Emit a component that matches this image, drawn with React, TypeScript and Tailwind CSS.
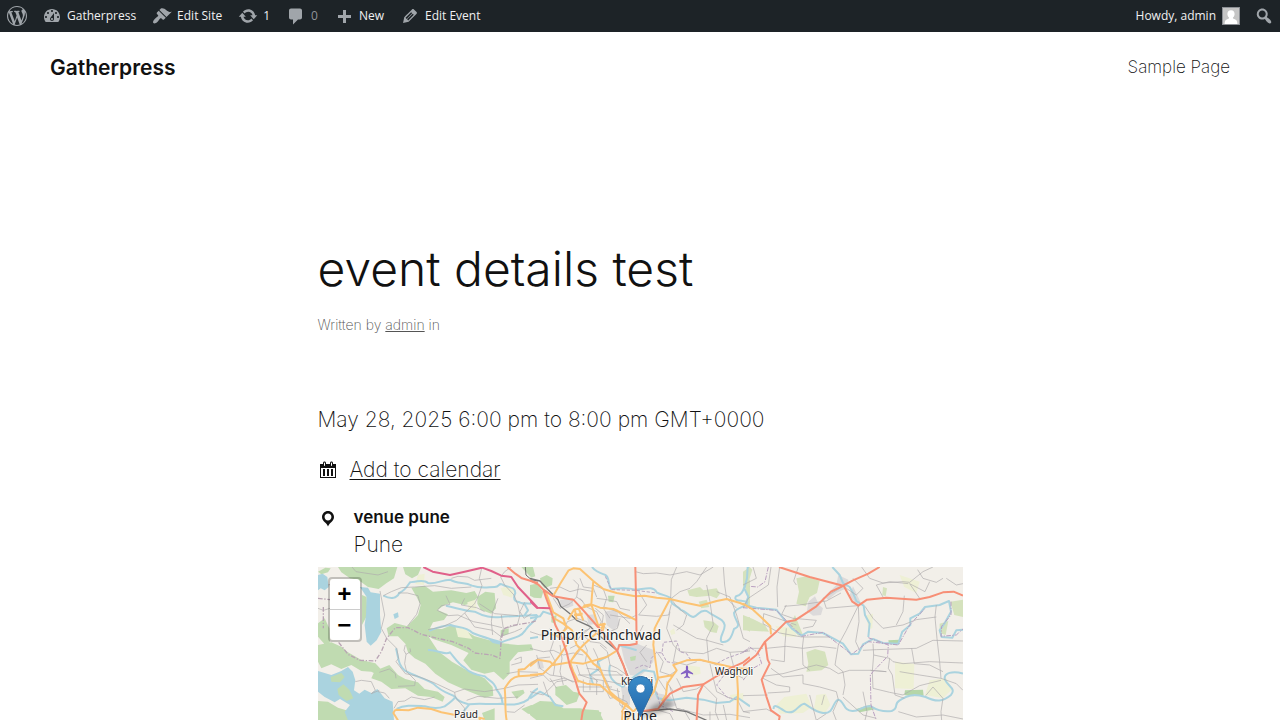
import type { ReactNode } from "react";

const ICONS = {
  wordpress:
    "M20 10c0-5.51-4.49-10-10-10C4.48 0 0 4.49 0 10c0 5.52 4.48 10 10 10 5.51 0 10-4.48 10-10zM7.78 15.37L4.37 6.22c.55-.02 1.17-.08 1.17-.08.5-.06.44-1.13-.06-1.11 0 0-1.45.11-2.37.11-.18 0-.37 0-.58-.01C4.12 2.69 6.87 1.11 10 1.11c2.33 0 4.45.87 6.05 2.34-.68-.11-1.65.39-1.65 1.58 0 .74.45 1.36.9 2.1.35.61.55 1.36.55 2.46 0 1.49-1.4 5-1.4 5l-3.03-8.37c.54-.02.82-.17.82-.17.5-.05.44-1.25-.06-1.22 0 0-1.44.12-2.38.12-.87 0-2.33-.12-2.33-.12-.5-.03-.56 1.2-.06 1.22l.92.08 1.26 3.41zM17.41 10c.24-.64.74-1.87.43-4.25.7 1.29 1.05 2.71 1.05 4.25 0 3.29-1.73 6.24-4.4 7.78.97-2.59 1.94-5.2 2.92-7.78zM6.1 18.09C3.12 16.65 1.11 13.53 1.11 10c0-1.3.23-2.48.72-3.59C3.25 10.3 4.67 14.2 6.1 18.09zm4.03-6.63l2.58 6.98c-.86.29-1.76.45-2.71.45-.79 0-1.57-.11-2.29-.33.81-2.38 1.62-4.74 2.42-7.1z",
  dashboard:
    "M3.76 16h12.48c1.1-1.37 1.76-3.11 1.76-5 0-4.42-3.58-8-8-8s-8 3.58-8 8c0 1.89.66 3.63 1.76 5zM10 4c.55 0 1 .45 1 1s-.45 1-1 1-1-.45-1-1 .45-1 1-1zM6 6c.55 0 1 .45 1 1s-.45 1-1 1-1-.45-1-1 .45-1 1-1zm8 0c.55 0 1 .45 1 1s-.45 1-1 1-1-.45-1-1 .45-1 1-1zm-5.37 5.55L12 7v6c0 1.1-.9 2-2 2s-2-.9-2-2c0-.57.24-1.08.63-1.45zM4 10c.55 0 1 .45 1 1s-.45 1-1 1-1-.45-1-1 .45-1 1-1zm12 0c.55 0 1 .45 1 1s-.45 1-1 1-1-.45-1-1 .45-1 1-1zm-5 3c0-.55-.45-1-1-1s-1 .45-1 1 .45 1 1 1 1-.45 1-1z",
  brush:
    "M14.48 11.06L7.41 3.99l1.5-1.5c.5-.56 2.3-.47 3.51.32 1.21.8 1.43 1.28 2.91 2.1 1.18.64 2.45 1.26 4.45.85zm-.71.71L6.7 4.7 4.93 6.47c-.39.39-.39 1.02 0 1.41l1.06 1.06c.39.39.39 1.03 0 1.42-.6.6-1.43 1.11-2.21 1.69-.35.26-.7.53-1.01.84C1.43 14.23.4 16.08 1.4 17.07c.99 1 2.84-.03 4.18-1.36.31-.31.58-.66.85-1.02.57-.78 1.08-1.61 1.69-2.21.39-.39 1.02-.39 1.41 0l1.06 1.06c.39.39 1.02.39 1.41 0z",
  update:
    "M10.2 3.28c3.53 0 6.43 2.61 6.92 6h2.08l-3.5 4-3.5-4h2.32c-.45-1.97-2.21-3.45-4.32-3.45-1.45 0-2.73.71-3.54 1.78L4.95 5.66C6.23 4.2 8.11 3.28 10.2 3.28zm-.4 13.44c-3.52 0-6.43-2.61-6.92-6H.8l3.5-4c1.17 1.33 2.33 2.67 3.5 4H5.48c.45 1.97 2.21 3.45 4.32 3.45 1.45 0 2.73-.71 3.54-1.78l1.71 1.95c-1.28 1.46-3.15 2.38-5.25 2.38z",
  comment: "M5 2.500h9c1.1 0 2 .9 2 2v7c0 1.1-.9 2-2 2h-2l-5 5v-5H5c-1.1 0-2-.9-2-2v-7c0-1.1.9-2 2-2z",
  plus: "M17 9v3h-5v5H9v-5H4V9h5V4h3v5h5z",
  edit: "M13.89 3.39l2.71 2.72c.46.46.42 1.24.03 1.64l-8.01 8.02-5.56 1.16 1.16-5.58s7.6-7.63 7.99-8.03c.39-.39 1.22-.39 1.68.07zm-2.73 2.79l-5.59 5.61 1.11 1.11 5.54-5.65zm-2.97 8.23l5.58-5.6-1.07-1.08-5.59 5.6z",
  search:
    "M12.14 4.18c1.87 1.87 2.11 4.75.72 6.89.12.1.22.21.36.31.2.16.47.36.81.59.34.24.56.39.66.47.42.31.73.57.94.78.32.32.6.65.84 1 .25.35.44.69.59 1.04.14.35.21.68.18 1-.02.32-.14.59-.36.81s-.49.34-.81.36c-.31.02-.65-.04-.99-.19-.35-.14-.7-.34-1.04-.59-.35-.24-.68-.52-1-.84-.21-.21-.47-.52-.77-.93-.1-.13-.25-.35-.47-.66-.22-.32-.4-.57-.56-.78-.16-.2-.29-.35-.44-.5-2.07 1.09-4.69.76-6.44-.98-2.14-2.15-2.14-5.64 0-7.78 2.15-2.15 5.63-2.15 7.78 0zm-1.41 6.36c1.36-1.37 1.36-3.58 0-4.95-1.37-1.37-3.59-1.37-4.95 0-1.37 1.37-1.37 3.58 0 4.95 1.36 1.37 3.58 1.37 4.95 0z",
  calendar:
    "M15 4h3v14H2V4h3V3c0-.83.67-1.5 1.5-1.5S8 2.17 8 3v1h4V3c0-.83.67-1.5 1.5-1.5S15 2.17 15 3v1zM6 3v2.5c0 .28.22.5.5.5s.5-.22.5-.5V3c0-.28-.22-.5-.5-.5S6 2.72 6 3zm7 0v2.5c0 .28.22.5.5.5s.5-.22.5-.5V3c0-.28-.22-.5-.5-.5s-.5.22-.5.5zm4 14V8H3v9h14zM7 16V9H5v7h2zm4 0V9H9v7h2zm4 0V9h-2v7h2z",
  location:
    "M10 2C6.69 2 4 4.69 4 8c0 2.02 1.17 3.71 2.53 4.89.43.37 1.18.96 1.85 1.83.74.97 1.41 2.01 1.62 2.71.21-.7.88-1.74 1.62-2.71.67-.87 1.42-1.46 1.85-1.83C14.83 11.71 16 10.02 16 8c0-3.31-2.69-6-6-6zm0 2.56c1.9 0 3.44 1.54 3.44 3.44S11.9 11.44 10 11.44 6.56 9.9 6.56 8 8.1 4.56 10 4.56z",
};

function Icon({ name, className = "" }: { name: keyof typeof ICONS; className?: string }) {
  return (
    <svg viewBox="0 0 20 20" aria-hidden="true" className={`size-5 shrink-0 fill-current ${className}`}>
      <path d={ICONS[name]} />
    </svg>
  );
}

function BarItem({ icon, children }: { icon: keyof typeof ICONS; children: ReactNode }) {
  return (
    <li>
      <a href="#" className="flex h-8 items-center gap-[5px] px-2">
        <Icon name={icon} className="text-[#a0a5aa]" />
        {children}
      </a>
    </li>
  );
}

function AdminBar() {
  return (
    <nav
      aria-label="Toolbar"
      className="flex h-8 items-center justify-between bg-[#1d2327] font-['Open_Sans',sans-serif] text-[12px] font-normal text-[#f0f0f1]"
    >
      <ul className="flex items-center">
        <li>
          <a href="#" aria-label="About WordPress" className="flex h-8 items-center px-[7px]">
            <Icon name="wordpress" className="text-[#a0a5aa]" />
          </a>
        </li>
        <BarItem icon="dashboard">Gatherpress</BarItem>
        <BarItem icon="brush">Edit Site</BarItem>
        <BarItem icon="update">1</BarItem>
        <BarItem icon="comment">
          <span className="text-[#8f9499]">0</span>
        </BarItem>
        <BarItem icon="plus">New</BarItem>
        <BarItem icon="edit">Edit Event</BarItem>
      </ul>
      <div className="flex items-center">
        <a href="#" className="flex h-8 items-center gap-1.5 px-2">
          Howdy, admin
          <svg viewBox="0 0 18 18" aria-hidden="true" className="size-[18px]">
            <rect width="18" height="18" fill="#8c8f94" />
            <rect x="1" y="1" width="16" height="16" fill="#c5c5c5" />
            <path
              d="M9 3.2c2.3 0 3.6 1.5 3.6 3.7 0 1.500-.7 2.900-1.700 3.600 0 1 .8 1.500 2.300 2 1.400.5 2 1.500 2.200 4.500H2.600c.2-3 .8-4 2.200-4.500 1.500-.5 2.300-1 2.300-2C6.100 9.800 5.400 8.400 5.400 6.900 5.400 4.700 6.700 3.200 9 3.200z"
              fill="#fff"
            />
          </svg>
        </a>
        <button type="button" aria-label="Search" className="flex h-8 items-center px-1.5">
          <Icon name="search" className="text-[#a0a5aa]" />
        </button>
      </div>
    </nav>
  );
}

type Layer = {
  fill?: string;
  stroke?: string;
  width?: number;
  dash?: string;
  paths: string[];
};

const WEST: Layer[] = [
  {
    fill: "#c0dbb1",
    paths: [
      "M60 6H238L228 40 205 55 182 72 150 66 120 44 96 40 70 22z",
      "M0 20L22 8 38 10 30 22 10 28z",
      "M255 6H310L300 30 282 40 262 28z",
      "M0 175L20 160 34 190 36 232 20 238 0 215z",
      "M132 90L146 96 148 150 132 180z",
      "M0 240L40 232 70 245 90 262 130 285 172 295 200 325 190 335 160 320 130 318 100 300 70 312 40 298 10 310 0 290z",
      "M280 68L320 62 345 80 400 76 445 84 470 78 480 95 462 115 440 120 405 112 380 120 358 135 390 148 378 165 345 172 336 190 372 192 402 180 440 196 470 214 545 234 600 240 640 238 646 256 600 262 575 290 575 326 556 345 528 320 500 326 460 314 436 286 452 264 400 240 345 222 330 212 360 258 402 290 440 312 500 340 524 366 526 392 500 398 440 374 390 352 352 326 322 296 290 280 270 262 262 236 240 214 212 214 206 190 230 174 268 184 300 150 308 120 296 96z",
      "M478 96L502 80 530 84 534 130 520 146 488 134 478 116z",
      "M170 318L214 300 240 330 262 342 300 352 320 372 360 380 380 396 374 410 340 396 300 392 262 370 220 372 190 350 160 340z",
      "M0 408L30 410 60 428 100 440 130 466H0z",
      "M610 6L645 6 652 34 640 38z",
      "M580 380L616 374 620 384 596 402z",
      "M610 432L640 420 660 430V450L630 446z",
      "M492 444L530 430 530 466H500z",
      "M548 196L572 190 572 206 548 216z",
    ],
  },
  {
    fill: "#eef0d5",
    paths: [
      "M548 70L572 62 590 76 582 98 556 90z",
      "M448 112L472 104 476 132 452 140z",
      "M412 184L446 196 464 222 420 216z",
      "M300 30L320 26 318 60 292 58z",
    ],
  },
  {
    fill: "#aad3df",
    paths: [
      "M126 66L150 68 158 82 186 86 186 150 190 200 176 226 158 242 146 230 140 180 144 150 146 96z",
      "M0 30L14 26 28 36 32 66 20 76 8 70 0 76z",
      "M0 318L20 324 40 330 70 318 90 306 104 320 112 346 108 376 124 386 140 374 160 384 178 372 200 400 224 410 228 466H90L80 440 96 420 66 402 50 412 20 396 0 380z",
      "M226 148L240 142 242 156 230 162z",
      "M510 222L548 230 552 240 524 234z",
    ],
  },
  {
    fill: "#c0dbb1",
    paths: ["M38 336L70 324 80 336 66 352 40 350z", "M58 372L76 358 94 374 106 400 86 408 62 390z"],
  },
  {
    stroke: "#aad3df",
    width: 6,
    paths: [
      "M196 92C220 104 236 100 244 84 262 76 270 60 276 52 300 48 320 44 330 54 350 60 372 44 396 44 420 58 440 50 462 62 490 72 510 66 530 66 546 66 540 54 552 58 572 70 590 62 592 84 580 110 600 112 612 114L640 116",
      "M384 122C420 130 440 138 470 140 500 156 520 158 548 156 580 152 610 154 658 150",
      "M334 198C356 186 376 184 398 180 420 190 440 182 464 204 490 216 520 222 550 232 580 218 604 222 622 196 640 168 656 170 658 150",
      "M330 255C360 254 380 272 396 262 410 278 420 296 440 308 456 326 480 330 500 334 520 352 528 350 536 374 546 390 552 390 554 416",
      "M234 250C242 280 240 300 262 318 290 334 320 340 346 356 376 386 400 386 412 396 420 412 440 414 454 418 490 414 520 420 550 416 590 424 620 412 630 404 640 390 640 380 660 370",
      "M236 432C260 418 290 422 320 424 340 430 360 432 380 424 400 410 410 400 412 396",
      "M454 418L436 440",
      "M600 110L620 118 630 136 620 150",
    ],
  },
  {
    stroke: "#adaaac",
    width: 2,
    paths: [
      "M186 78L200 150 190 190 206 220 236 250 242 280 234 290 262 326 300 334 346 352 410 382 440 372 500 380 560 370 600 360 660 358",
      "M196 92L220 80 250 68 290 66 350 62 400 70 460 66",
      "M240 84L268 84 300 92 306 116 296 148 268 184",
      "M400 40L420 34 450 36 470 46 520 40",
      "M492 6L484 40 492 62 480 96 470 116 440 144 416 166 372 186 330 194",
      "M580 6L560 20 548 36 560 60 588 90 600 120 606 150 598 180 560 190 550 214",
      "M384 92L396 118 370 122 358 136 390 152 420 150 466 170 520 180 552 188",
      "M440 144L470 186 524 196 548 214 590 200 612 190",
      "M484 116L530 146 600 152",
      "M440 100L430 120 476 128 500 140",
      "M540 100L524 140 520 170 524 210",
      "M262 240L258 256 264 268 278 260 276 250",
      "M264 268L260 296 266 320 292 346 290 362 240 364",
      "M228 430L240 410 260 408 280 396 320 404 350 396",
      "M410 382L412 396 440 430 440 440",
      "M446 406L480 394 540 400 600 396",
      "M112 350L130 346 160 350 172 376 160 386 184 376",
      "M180 380L200 384 214 400",
      "M184 322L214 312 232 326 234 340",
      "M550 150L556 190 546 226",
      "M620 112L606 140 618 160 640 146",
      "M566 440L590 442 620 420",
      "M580 300L610 292 610 276 590 284",
      "M102 6L114 20 140 24 180 30 210 20",
      "M30 60L50 56 70 46 100 44",
      "M36 130L16 136 0 130",
      "M566 326L600 320 660 322",
    ],
  },
  {
    stroke: "#b9a4b4",
    width: 4,
    dash: "14 5 4 5",
    paths: [
      "M0 100L36 104M16 126V190M62 232L90 268 126 286 172 288 190 260 206 220 232 188 270 188 310 208 350 218 404 230 452 250 470 264 520 270 546 280 550 220 560 190 580 182 640 172 658 166",
    ],
  },
  {
    stroke: "#fcc373",
    width: 6,
    paths: [
      "M232 434L272 436 300 428 340 432 370 442 412 450",
      "M232 434L226 444 240 466",
      "M486 466L484 458 500 462",
      "M566 466C560 440 564 400 560 370 570 356 580 336 602 334L660 330",
      "M602 334L602 314 620 312 640 294 660 284",
    ],
  },
  { stroke: "#e0608a", width: 6, paths: ["M316 6L344 20 396 30 440 20 492 8 520 18 550 32 580 36 600 66 640 108 660 130"] },
  { stroke: "#f78f76", width: 6, paths: ["M568 6L592 26 612 40 660 54"] },
  { stroke: "#6f6f6f", width: 3, paths: ["M622 6L624 30 640 44 660 48"] },
];

const CENTER: Layer[] = [
  {
    fill: "#dcdada",
    paths: [
      "M272 240L318 234 340 244 374 256 370 290 350 316 330 334 300 330 284 290z",
      "M90 104L128 100 130 122 110 130 92 122z",
      "M330 398L380 384 420 392 440 420 400 436 350 434z",
      "M224 140L262 132 268 180 250 196 230 180z",
      "M170 150L196 148 200 176 176 180z",
      "M272 360L300 370 300 420 280 410z",
      "M20 290L36 284 42 310 24 312z",
    ],
  },
  {
    fill: "#c0dbb1",
    paths: [
      "M0 60L20 56 40 80 34 100 12 98 0 92z",
      "M30 40L50 30 68 40 66 60 44 70 34 58z",
      "M76 366L108 360 130 380 150 384 140 410 110 420 88 400 76 390z",
      "M0 424L30 408 70 410 100 430 150 430 214 442 210 466H20L0 450z",
      "M118 456L150 432 206 436 220 466H130z",
      "M64 156L80 150 76 176 64 172z",
      "M300 276L318 272 316 286 302 288z",
      "M234 92L254 92 250 112 236 110z",
    ],
  },
  {
    fill: "#d5e2bd",
    paths: [
      "M472 76L510 66 520 76 560 70 570 86 560 100 540 92 500 96 478 92z",
      "M506 110L530 104 538 126 514 130z",
      "M520 166L550 170 566 184 560 204 540 200 524 186z",
      "M642 160L660 156V200L642 190z",
      "M640 48L660 44V120L650 130 652 90z",
    ],
  },
  { fill: "#eef0d5", paths: ["M420 198L432 190 436 206 424 210z", "M470 300L510 306 512 326 488 332z", "M600 390L640 384 640 404 606 410z"] },
  {
    stroke: "#aad3df",
    width: 6,
    paths: [
      "M186 6C196 20 210 24 226 30 240 36 232 60 244 72 266 70 290 66 316 74 344 72 370 62 380 82 396 92 416 90 424 102 420 122 440 118 452 134 470 138 476 156 490 156 508 150 506 134 530 138 560 160 580 160 584 180 586 200 566 214 574 230 600 236 606 210 612 192 640 180 612 166 612 144 620 124 650 128 652 112 640 104 608 112 618 94 640 90 640 70 650 50L656 6",
      "M0 160L30 154 40 140 70 150",
      "M240 300C230 340 260 360 280 366M280 366C300 340 320 330 340 316L372 320 380 350 374 376 384 400 420 406 470 398 520 404 560 414 600 410 620 396 660 424",
      "M190 360L180 330 210 310 204 290 240 270",
      "M264 240L300 250 320 256",
      "M0 220L24 216",
      "M0 400L30 380 60 396 76 420 100 424",
    ],
  },
  {
    stroke: "#adaaac",
    width: 2,
    paths: [
      "M440 6L424 44 422 100 440 124 470 150 460 180 440 196",
      "M316 20L340 26 380 24 420 30 470 20 510 30 550 6",
      "M326 80L350 120 326 150 380 154 416 150 424 118",
      "M424 100L450 80 480 70 500 50 530 6",
      "M530 60L540 110 550 180 530 220 536 290 560 300",
      "M560 80L600 96 620 150 640 220 660 230",
      "M580 6L584 60 590 100 620 130",
      "M420 140L410 190 430 240 450 260 520 266 560 250 600 262 660 258",
      "M430 180L500 220 530 226 580 240",
      "M440 240L430 290 470 300 500 290",
      "M600 262L610 300 600 320 640 340",
      "M540 296L550 340 560 380 600 400",
      "M520 360L560 400 556 440 566 466",
      "M440 340L460 380 500 372 518 360",
      "M420 366L430 400 440 430 480 440",
      "M440 430L520 450 600 448 660 458",
      "M540 440V466M580 420L590 466M620 400L640 440 660 444",
      "M0 200L30 210 60 206 90 220 120 216 140 230 160 200 180 190",
      "M0 250L40 260 70 256 100 270 130 264 160 270",
      "M20 270L30 310 60 330 100 336 130 352",
      "M60 190L70 230 60 260 76 290 70 330",
      "M0 340L40 330 60 350 100 340 140 352",
      "M0 380L40 390 80 350 110 346",
      "M90 240L96 280 90 320 100 360",
      "M60 70L90 66 120 80 150 72 190 80",
      "M70 100L90 130 120 116 140 96 160 110",
      "M100 200L112 170 140 160 170 170 180 190 160 206",
      "M150 200L180 230 210 234 230 250",
      "M190 60L220 72 230 100 220 130 240 160",
      "M150 100L170 126 200 140 214 170 206 190",
      "M200 100L230 104 260 110 270 130 300 136",
      "M196 130L220 150 216 180 240 200 262 190 270 160",
      "M240 150L300 160 320 150",
      "M222 126L262 140 300 176",
      "M160 230L172 256 166 290 180 330 204 350",
      "M190 250L204 280 200 310 226 340 240 372 270 380",
      "M210 240L232 260 240 300 262 310 290 330",
      "M170 310L220 316 260 320 284 340",
      "M140 300L150 330 180 340 250 352 286 360",
      "M144 330H280M160 344V380H220V348M180 344V376M200 346V390M140 366H246",
      "M226 370L240 400 260 396 290 410 300 430",
      "M262 370L270 420 300 440M280 390L276 430",
      "M380 260L400 290 390 320 420 330 440 316",
      "M384 340L410 380 400 420M410 350L430 380",
      "M150 40L160 66 190 70 200 96",
      "M130 44L146 60 140 96",
      "M0 300L24 280 60 276",
      "M120 250L140 240 150 256 130 280",
      "M40 350L56 396M60 340L80 370",
      "M350 240L330 262 350 290M300 210L330 200 340 180",
      "M384 436L420 446 430 466M460 432L480 466",
    ],
  },
  {
    stroke: "#b8a6c0",
    width: 3,
    dash: "10 5",
    paths: [
      "M316 310L340 300 360 308 364 280 380 262 396 264 400 232 440 228 450 260 470 266 480 282 520 288 560 296 590 280 640 262 660 254",
      "M590 320L560 360 590 396 620 404",
      "M226 34L244 74 316 76 380 84",
      "M396 264L410 290 440 296",
      "M380 380L390 420 430 440",
    ],
  },
  { stroke: "#767676", width: 4, paths: ["M0 40L30 48 56 76 84 104 92 124 120 146 140 166 180 184 210 214 260 256 280 300 296 340 300 380", "M330 440L420 432 470 440 530 466"] },
  {
    stroke: "#fcc373",
    width: 6,
    paths: [
      "M70 92L92 54 116 16 130 10 150 12 190 48 220 72 260 84 316 94 344 92 380 98 420 102 470 114 510 122 560 108 590 102 630 114 660 126",
      "M190 48L186 90 184 118 206 186 214 200",
      "M160 122L184 118 210 128 250 132 300 156 320 166",
      "M420 102L400 140 384 170 374 190 370 240 378 300 384 340",
      "M384 338L430 330 440 316 430 300 470 286 510 284 560 296 620 310 660 312",
      "M620 310L624 380 622 466",
      "M430 330L412 356 408 390 396 408",
      "M0 304L24 284 60 290 70 300 120 292 160 296 230 276 262 256",
      "M0 330L40 326 66 300",
      "M120 292L140 262 160 240 204 200 226 176",
      "M140 240L126 196 100 176 66 156",
      "M46 78L58 110 70 142 100 160 110 190 84 214 60 206",
      "M114 164L132 134 150 130 184 120",
      "M134 130L140 164M146 130L160 166M132 150L158 146",
      "M206 180L224 176 216 206",
      "M140 240L170 268 190 296 210 310 226 350 240 380 262 400 290 420 310 440",
      "M110 240L90 270 70 296",
      "M140 346L170 356 210 360 250 396 300 430",
      "M120 292L130 320 146 352",
      "M384 340L372 380 350 408 330 440",
      "M360 400L330 420 310 440 290 466M278 440L276 466M290 414L276 440 300 450",
    ],
  },
  {
    stroke: "#f78f76",
    width: 6,
    paths: [
      "M0 46L24 58 40 74 48 98 60 130 76 180 96 220 110 262 120 304 136 346 148 386 170 412 158 440 154 466",
      "M40 74L70 94 130 104 160 136 204 186 262 258 268 240 300 240 320 236 318 94 316 6",
      "M262 258L280 300 292 336 310 380 330 440",
      "M340 438L384 432 400 410 420 386 460 366 520 358 556 336 600 310 640 292 660 276",
      "M520 358L504 390 500 466",
    ],
  },
  { stroke: "#e0608a", width: 6, paths: ["M0 108L20 128 60 130"] },
];

const EAST: Layer[] = [
  {
    fill: "#d5e2bd",
    paths: [
      "M160 40L190 34 230 48 222 84 200 96 188 124 160 116 168 80z",
      "M190 262L216 252 246 260 256 300 236 316 190 320 196 296z",
      "M0 150L30 162 66 180 78 200 0 196z",
      "M622 110L660 104V156L634 150z",
      "M420 66L432 70 428 94 418 90z",
      "M590 176L616 168 608 210 590 204z",
      "M0 20L20 6 28 14 14 60 0 66z",
      "M156 150L180 210 166 212 140 182z",
    ],
  },
  {
    fill: "#eef0d5",
    paths: [
      "M456 290L514 296 512 372 456 370z",
      "M124 396L190 386 206 426 180 444 110 446 100 420z",
      "M220 390L248 386 262 420 244 446 212 436z",
      "M560 346L610 340 628 372 600 400 546 390z",
      "M470 30L530 50 520 84 484 66z",
      "M370 150L390 146 388 190 376 192z",
      "M96 182L156 190 160 216 120 214z",
    ],
  },
  {
    fill: "#dcdada",
    paths: ["M196 110L216 94 228 120 240 130 234 150 210 152 192 138z", "M286 30L316 44 310 70 280 84 256 104 244 96 280 60z", "M330 64L352 110 340 120 320 90z"],
  },
  {
    fill: "#b5d6a8",
    paths: ["M486 376L540 374 542 392 510 394 484 390z", "M436 226L470 224 462 240 438 236z", "M340 432L380 420 400 432 350 442z"],
  },
  {
    stroke: "#aad3df",
    width: 6,
    paths: [
      "M14 6L12 40 4 70 16 96 6 120 40 128 100 134 124 164 146 190 176 212 196 200 240 204 300 236 324 268 346 266 360 238 390 222 420 234 466 236 478 200 502 180 502 160 530 146 546 126 590 120 618 108 624 140 604 176 590 196 596 216 628 218 640 196 660 194",
      "M268 6L290 30 300 54 320 66 332 88 340 108 362 122 366 150 380 176 376 216",
      "M92 432C90 414 110 428 128 440 160 450 164 418 184 416 204 428 216 440 240 444 276 446 266 412 286 404 304 406 300 440 330 438 352 438 360 420 384 424 400 434 420 442 446 438 470 428 450 418 470 406 500 386 520 388 548 396 580 412 600 410 624 390 640 370 616 366 606 344 600 324 630 316 660 326",
    ],
  },
  {
    stroke: "#adaaac",
    width: 2,
    paths: [
      "M84 6L76 60 16 100 0 130",
      "M110 6L102 66 104 126",
      "M166 6L152 48 160 60",
      "M124 124L170 120 250 108 294 84",
      "M130 120L116 148 150 160 220 166 210 184 180 190",
      "M62 146L104 160 160 180M62 146L60 176 110 204 176 216 260 216",
      "M300 64L240 100 250 130 344 122",
      "M346 122L310 196 286 240 276 300 300 320 306 360 300 390",
      "M346 122L348 170 338 230 350 256",
      "M310 70L340 90 360 70 330 40",
      "M356 6L380 40 420 54 480 50 500 52 540 20 570 6",
      "M496 56L440 50 400 60 420 96 M500 56L530 100M500 56L546 80 560 50",
      "M366 124L390 160 420 190 480 180 520 164 580 156",
      "M484 92L480 140 460 180",
      "M580 120L576 156 582 220 590 290 594 340",
      "M390 236L392 270 440 280 450 290 480 296 560 290 660 294",
      "M360 256L400 254 520 250 570 226 660 228",
      "M440 280L436 310 448 330 456 390 484 400",
      "M382 316L430 320 382 316 320 316 286 326 260 310 220 300 180 310 120 326 60 334",
      "M280 250L230 244 180 250 130 244 70 250",
      "M182 214L178 250 180 300 200 316",
      "M130 190L126 236 124 290 84 284",
      "M180 330L180 356 230 366 280 380 286 404",
      "M60 340L100 360 140 366 140 380 74 384",
      "M60 250L20 250 0 262",
      "M0 392L74 390",
      "M0 440L70 432 86 440",
      "M84 310L120 336 180 330",
      "M392 270L388 320 390 370 440 382 480 390 530 362 594 346",
      "M286 404L270 440 280 466M300 396L360 450 400 460",
      "M360 380L372 440 366 466",
      "M470 320L530 330 594 340 640 356 660 376",
      "M506 250L514 296 560 300 600 320",
      "M548 392L570 366 600 400 594 440 596 466",
      "M200 390L220 466M244 390L236 420M250 446L220 466",
      "M466 440L520 456 600 450 660 462",
      "M524 14L540 40 580 52 600 40",
      "M610 40L640 60 660 56",
      "M30 6L40 40 0 60",
    ],
  },
  {
    stroke: "#b99fc0",
    width: 3,
    dash: "14 4 4 4",
    paths: [
      "M76 6L66 50 44 66 20 64",
      "M0 262L20 246 46 264 56 296 30 310 0 346",
      "M376 218L436 240 434 274 390 320 382 330 384 420 400 466",
      "M624 110L624 150 596 184 594 214 640 210 660 192",
      "M0 128L100 136 176 214 240 202 326 268 376 230 466 240 500 180 548 128",
    ],
  },
  { stroke: "#fcc373", width: 6, paths: ["M0 116L30 134 60 162 82 184 84 208"] },
  {
    stroke: "#f78f76",
    width: 6,
    paths: [
      "M108 6L200 36 300 62 330 46 376 26 410 6",
      "M302 62L264 80 220 124 156 166 130 170 100 200 66 230 40 270 0 302",
      "M302 62L328 110 346 122 372 104 430 98 520 104 560 96 600 82 632 80 660 92",
      "M66 228L74 284 80 296 56 344 70 394 84 436 110 454 108 466",
    ],
  },
];

const REGIONS = [
  { name: "west", x: 0, layers: WEST },
  { name: "center", x: 212, layers: CENTER },
  { name: "east", x: 425, layers: EAST },
];

const PLACES = [
  { name: "Pimpri-Chinchwad", x: 283, y: 73, size: 14 },
  { name: "Khadki", x: 319, y: 118, size: 10 },
  { name: "Wagholi", x: 416, y: 108, size: 10 },
  { name: "Paud", x: 148, y: 151, size: 10 },
  { name: "Pune", x: 322, y: 154, size: 14 },
];

function EventMap() {
  return (
    <section aria-label="Map of the venue" className="relative">
      <svg viewBox="0 0 645 153" className="block w-full bg-[#f2efe9]">
        <defs>
          <linearGradient id="pin" x1="0" y1="0" x2="0" y2="1">
            <stop offset="0" stopColor="#3a8cc9" />
            <stop offset="1" stopColor="#2468ab" />
          </linearGradient>
          <filter id="soft" x="-20%" y="-20%" width="140%" height="140%">
            <feGaussianBlur stdDeviation="2" />
          </filter>
          <clipPath id="tile">
            <rect width="660" height="465" />
          </clipPath>
        </defs>
        {REGIONS.map((region) => (
          <g key={region.name} transform={`translate(${region.x} -2) scale(0.3333)`} clipPath="url(#tile)">
            {region.layers.map((layer, i) => (
              <path
                key={i}
                d={layer.paths.join("")}
                fill={layer.fill ?? "none"}
                stroke={layer.stroke}
                strokeWidth={layer.width}
                strokeDasharray={layer.dash}
                strokeLinejoin="round"
              />
            ))}
          </g>
        ))}
        <path
          d="M369 98.500c.8 0 1.100.9 1.100 2v2.400l5 3.300v1.400l-5-1.700v3l1.700 1.300v1l-2.800-.8-2.800.8v-1l1.700-1.300v-3l-5 1.700v-1.400l5-3.300v-2.400c0-1.100.3-2 1.100-2z"
          fill="#8461c4"
        />
        {PLACES.map((place) => (
          <text
            key={place.name}
            x={place.x}
            y={place.y}
            fontSize={place.size}
            textAnchor="middle"
            fill="#222"
            stroke="#fff"
            strokeOpacity="0.7"
            strokeWidth="2"
            paintOrder="stroke"
            className="font-['Noto_Sans',sans-serif] font-normal"
          >
            {place.name}
          </text>
        ))}
        <path d="M323 150L336 138 350 133 356 137 346 144z" fill="#000" opacity="0.3" filter="url(#soft)" />
        <g transform="translate(310 109)">
          <path
            d="M12.500.5C5.800.5.5 5.800.5 12.400c0 2.400.7 4.500 1.800 6.400l10.200 21.700 10.200-21.700c1.100-1.900 1.800-4 1.800-6.400C24.500 5.800 19.200.5 12.500.5z"
            fill="url(#pin)"
            stroke="#2e6da4"
          />
          <circle cx="12.500" cy="12.500" r="4.500" fill="#fff" stroke="#2e6da4" strokeWidth="0.600" />
        </g>
      </svg>
      <div className="absolute top-2.5 left-2.5 flex flex-col rounded border-2 border-black/20 bg-clip-padding font-['Liberation_Mono',monospace] text-[24px] leading-[26px] font-bold text-black">
        <button type="button" aria-label="Zoom in" className="h-[31px] w-[30px] rounded-t-sm border-b border-[#ccc] bg-white pt-1">
          +
        </button>
        <button type="button" aria-label="Zoom out" className="h-[30px] w-[30px] rounded-b-sm bg-white pt-1">
          −
        </button>
      </div>
    </section>
  );
}

export default function App() {
  return (
    <div className="min-h-screen bg-white font-['Inter',sans-serif] font-extralight text-[#111]">
      <AdminBar />
      <header className="flex items-center justify-between px-[50px] py-5">
        <a href="#" className="text-[21px] leading-[31px] font-semibold">
          Gatherpress
        </a>
        <nav aria-label="Pages">
          <a href="#" className="text-[17px] leading-[31px]">
            Sample Page
          </a>
        </nav>
      </header>
      <main className="mx-auto max-w-[645px] pt-[139px]">
        <h1 className="text-[48px] leading-[54px] font-light">event details test</h1>
        <p className="mt-[19px] text-[14px] leading-5 text-[#555]">
          Written by{" "}
          <a href="#" className="underline">
            admin
          </a>{" "}
          in
        </p>
        <p className="mt-[69px] text-[21px] leading-[31px]">
          <time>May 28, 2025 6:00 pm to 8:00 pm GMT+0000</time>
        </p>
        <div className="mt-[19px] flex items-center gap-3">
          <Icon name="calendar" />
          <a href="#" className="text-[21px] leading-[31px] underline decoration-1 underline-offset-2">
            Add to calendar
          </a>
        </div>
        <div className="mt-[18px] flex items-start gap-4 pb-2">
          <Icon name="location" className="mt-1.5" />
          <address className="not-italic">
            <p className="text-[17px] leading-7 font-semibold">venue pune</p>
            <p className="text-[21px] leading-7">Pune</p>
          </address>
        </div>
        <EventMap />
      </main>
    </div>
  );
}
